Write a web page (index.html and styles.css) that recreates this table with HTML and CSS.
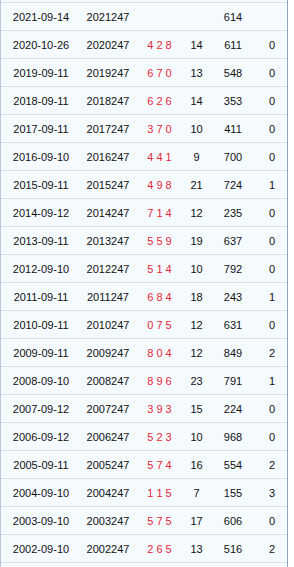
FILE: index.html
```html
<!DOCTYPE html>
<html>
<head>
<meta charset="utf-8">
<link rel="stylesheet" href="styles.css">
</head>
<body>
<div class="table">
  <div class="row"><span>2021-09-14</span><span>2021247</span><span class="red"></span><span></span><span>614</span><span></span></div>
  <div class="row"><span>2020-10-26</span><span>2020247</span><span class="red">4 2 8</span><span>14</span><span>611</span><span>0</span></div>
  <div class="row"><span>2019-09-11</span><span>2019247</span><span class="red">6 7 0</span><span>13</span><span>548</span><span>0</span></div>
  <div class="row"><span>2018-09-11</span><span>2018247</span><span class="red">6 2 6</span><span>14</span><span>353</span><span>0</span></div>
  <div class="row"><span>2017-09-11</span><span>2017247</span><span class="red">3 7 0</span><span>10</span><span>411</span><span>0</span></div>
  <div class="row"><span>2016-09-10</span><span>2016247</span><span class="red">4 4 1</span><span>9</span><span>700</span><span>0</span></div>
  <div class="row"><span>2015-09-11</span><span>2015247</span><span class="red">4 9 8</span><span>21</span><span>724</span><span>1</span></div>
  <div class="row"><span>2014-09-12</span><span>2014247</span><span class="red">7 1 4</span><span>12</span><span>235</span><span>0</span></div>
  <div class="row"><span>2013-09-11</span><span>2013247</span><span class="red">5 5 9</span><span>19</span><span>637</span><span>0</span></div>
  <div class="row"><span>2012-09-10</span><span>2012247</span><span class="red">5 1 4</span><span>10</span><span>792</span><span>0</span></div>
  <div class="row"><span>2011-09-11</span><span>2011247</span><span class="red">6 8 4</span><span>18</span><span>243</span><span>1</span></div>
  <div class="row"><span>2010-09-11</span><span>2010247</span><span class="red">0 7 5</span><span>12</span><span>631</span><span>0</span></div>
  <div class="row"><span>2009-09-11</span><span>2009247</span><span class="red">8 0 4</span><span>12</span><span>849</span><span>2</span></div>
  <div class="row"><span>2008-09-10</span><span>2008247</span><span class="red">8 9 6</span><span>23</span><span>791</span><span>1</span></div>
  <div class="row"><span>2007-09-12</span><span>2007247</span><span class="red">3 9 3</span><span>15</span><span>224</span><span>0</span></div>
  <div class="row"><span>2006-09-12</span><span>2006247</span><span class="red">5 2 3</span><span>10</span><span>968</span><span>0</span></div>
  <div class="row"><span>2005-09-11</span><span>2005247</span><span class="red">5 7 4</span><span>16</span><span>554</span><span>2</span></div>
  <div class="row"><span>2004-09-10</span><span>2004247</span><span class="red">1 1 5</span><span>7</span><span>155</span><span>3</span></div>
  <div class="row"><span>2003-09-10</span><span>2003247</span><span class="red">5 7 5</span><span>17</span><span>606</span><span>0</span></div>
  <div class="row"><span>2002-09-10</span><span>2002247</span><span class="red">2 6 5</span><span>13</span><span>516</span><span>2</span></div>
</div>
</body>
</html>
```
FILE: styles.css
```css
html, body {
  margin: 0;
  padding: 0;
  background: #ffffff;
}
body {
  font-family: "Liberation Sans", Arial, sans-serif;
  font-size: 11px;
  color: #111;
}
.table {
  width: 286px;
  height: 567px;
  box-sizing: content-box;
  background: #f5faff;
  border-left: 1px solid #b8c8d8;
  border-right: 1px solid #8ea4bb;
  padding-top: 2px;
  box-sizing: border-box;
  width: 288px;
}
.row {
  display: grid;
  grid-template-columns: 80px 54px 49px 25px 48px 30px;
  height: 28px;
  box-sizing: border-box;
  border-top: 1px solid #dcdfe3;
  align-items: center;
  text-align: center;
}
.row:last-child {
  border-bottom: 1px solid #dcdfe3;
  height: 29px;
}
.red {
  color: #e2283a;
}
```
